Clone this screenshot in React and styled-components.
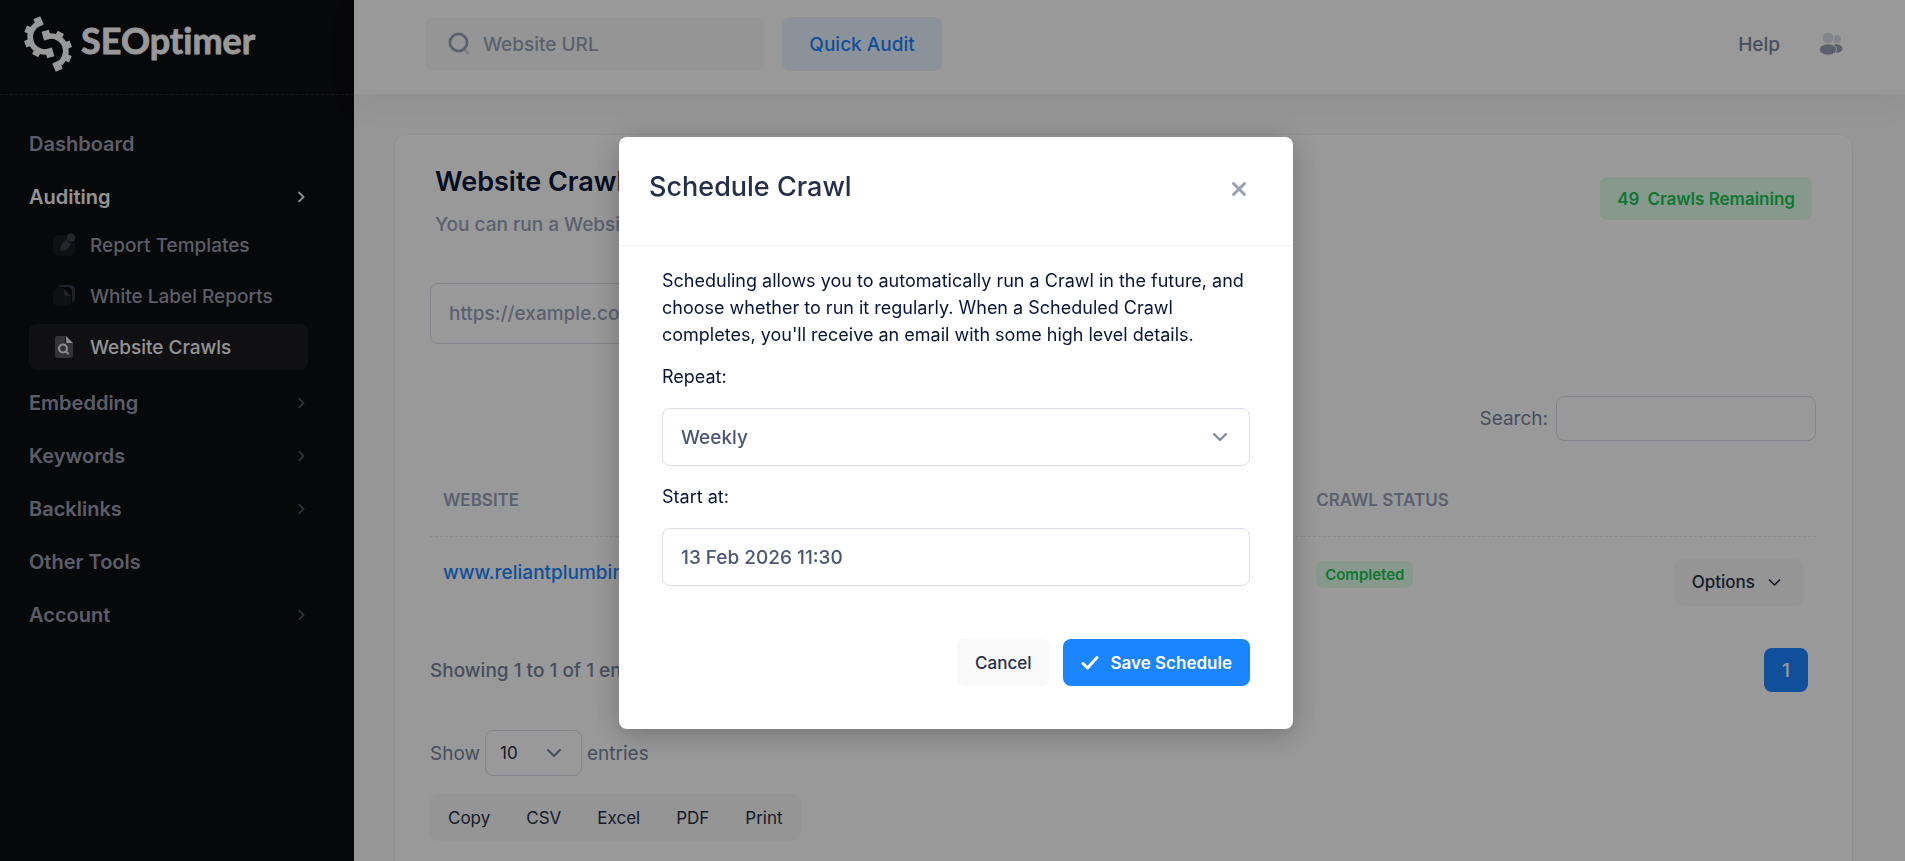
import React, { useState } from 'react'
import styled, { createGlobalStyle } from 'styled-components'

const GlobalStyle = createGlobalStyle`
  *, *::before, *::after {
    box-sizing: border-box;
  }
  body {
    margin: 0;
    overflow: hidden;
    background: #fafafa;
    color: #071437;
    font-family: Inter, "Liberation Sans", sans-serif;
    font-size: 18px;
  }
  button, input, select {
    font-family: inherit;
    margin: 0;
  }
  a {
    text-decoration: none;
  }
  h1, h2, p {
    margin: 0;
  }
  svg {
    flex: none;
  }
`;

/* ---------- shell ---------- */

const Shell = styled.div`
  display: flex;
  height: 100vh;
`;
const Main = styled.div`
  display: flex;
  flex-direction: column;
  flex: 1;
  min-width: 0;
`;

/* ---------- sidebar ---------- */

const Sidebar = styled.aside`
  flex: 0 0 354px;
  background: #0d0e12;
`;
const Brand = styled.a`
  display: flex;
  align-items: center;
  height: 95px;
  padding: 0 0 6px 22px;
  border-bottom: 1px dashed #24252d;
`;
const Nav = styled.nav`
  display: flex;
  flex-direction: column;
  gap: 8px;
  padding: 26px 46px 0 29px;
`;
const NavLink = styled.a`
  display: flex;
  align-items: center;
  justify-content: space-between;
  height: 45px;
  font-size: 20px;
  font-weight: 600;
  color: ${props => (props.$active ? '#f5f5f5' : '#9a9cae')};

  svg {
    color: ${props => (props.$active ? '#f5f5f5' : '#50525e')};
  }
`;
const SubNav = styled.div`
  display: flex;
  flex-direction: column;
  gap: 5px;
  margin: -5px 0 2px;
`;
const SubLink = styled.a`
  display: flex;
  align-items: center;
  gap: 14px;
  height: 46px;
  padding-left: 23px;
  border-radius: 8px;
  font-size: 19px;
  font-weight: 500;
  color: ${props => (props.$active ? '#f5f5f5' : '#9a9cae')};
  background: ${props => (props.$active ? '#1c1c1f' : 'transparent')};
`;

/* ---------- top bar ---------- */

const Topbar = styled.header`
  display: flex;
  align-items: center;
  justify-content: space-between;
  flex: none;
  height: 94px;
  padding: 0 62px 6px 71px;
  background: #fff;
  box-shadow: 0 10px 30px rgba(0, 0, 0, 0.05);
`;
const TopGroup = styled.div`
  display: flex;
  align-items: center;
  gap: ${props => props.$gap};
`;
const UrlBox = styled.label`
  display: flex;
  align-items: center;
  gap: 12px;
  width: 340px;
  height: 54px;
  padding: 0 22px;
  border-radius: 8px;
  background: #f9f9f9;
`;
const UrlInput = styled.input`
  width: 100%;
  min-width: 0;
  border: 0;
  padding: 0;
  background: none;
  font-size: 19px;
  font-weight: 500;

  &::placeholder {
    color: #99a1b7;
  }
`;
const AuditButton = styled.button`
  height: 54px;
  width: 160px;
  border: 0;
  border-radius: 8px;
  background: #e9f3ff;
  color: #1b84ff;
  font-size: 19px;
  font-weight: 500;
`;
const HelpLink = styled.a`
  font-size: 19px;
  font-weight: 500;
  color: #78829d;
`;
const PlainButton = styled.button`
  display: flex;
  border: 0;
  padding: 0;
  background: none;
`;

/* ---------- crawl card ---------- */

const Card = styled.main`
  flex: none;
  margin: 40px 52px 0 40px;
  padding: 26px 36px 60px 35px;
  border: 1px solid #f1f1f4;
  border-radius: 12px;
  background: #fff;
`;
const CardHead = styled.div`
  display: flex;
  align-items: flex-start;
  justify-content: space-between;
  padding: 0 4px 0 5px;
`;
const Title = styled.h1`
  font-size: 27px;
  font-weight: 600;
  line-height: 42px;
`;
const Subtitle = styled.p`
  margin-top: 4px;
  font-size: 19px;
  font-weight: 500;
  line-height: 36px;
  color: #99a1b7;
`;
const Remaining = styled.span`
  display: flex;
  align-items: center;
  gap: 8px;
  height: 43px;
  margin-top: 16px;
  padding: 0 17px;
  border-radius: 8px;
  background: #dfffea;
  color: #17c653;
  font-size: 17px;
  font-weight: 600;
`;
const CrawlInput = styled.input`
  display: block;
  width: 480px;
  height: 61px;
  margin-top: 40px;
  padding: 0 18px;
  border: 1px solid #dbdfe9;
  border-radius: 8px;
  background: #fff;
  font-size: 19px;
  font-weight: 500;

  &::placeholder {
    color: #99a1b7;
  }
`;
const SearchRow = styled.label`
  display: flex;
  align-items: center;
  justify-content: flex-end;
  gap: 8px;
  margin-top: 52px;
  font-size: 19px;
  color: #78829d;
`;
const SearchInput = styled.input`
  width: 260px;
  height: 45px;
  padding: 0 14px;
  border: 1px solid #dbdfe9;
  border-radius: 8px;
  background: #fff;
`;
const Table = styled.table`
  width: 100%;
  margin-top: 24px;
  border-collapse: collapse;
  table-layout: fixed;
`;
const Th = styled.th`
  width: ${props => props.$width};
  height: 71px;
  padding: 0 13px;
  border-bottom: 1px dashed #e8e8ee;
  text-align: left;
  font-size: 17px;
  font-weight: 600;
  color: #99a1b7;
`;
const Td = styled.td`
  height: 92px;
  padding: 22px 13px 0;
  vertical-align: top;
  text-align: ${props => props.$align || 'left'};
`;
const SiteLink = styled.a`
  font-size: 19px;
  font-weight: 500;
  line-height: 28px;
  color: #1b84ff;
`;
const Status = styled.span`
  display: inline-flex;
  align-items: center;
  height: 27px;
  margin-top: 2px;
  padding: 0 9px;
  border-radius: 7px;
  background: #dfffea;
  color: #17c653;
  font-size: 15px;
  font-weight: 600;
`;
const Button = styled.button`
  display: inline-flex;
  align-items: center;
  justify-content: center;
  gap: 12px;
  height: 47px;
  padding: 0 18px;
  border: 0;
  border-radius: 8px;
  background: ${props => (props.$primary ? '#1b84ff' : '#f9f9f9')};
  color: ${props => (props.$primary ? '#fff' : '#252f4a')};
  font-size: 17px;
  font-weight: ${props => (props.$primary ? 600 : 500)};
`;
const OptionsButton = styled(Button)`
  padding-right: 21px;
`;
const TableFoot = styled.div`
  display: flex;
  align-items: center;
  justify-content: space-between;
  margin-top: 20px;
  padding-right: 8px;
  font-size: 19px;
  font-weight: 500;
  color: #78829d;
`;
const PageButton = styled.button`
  width: 44px;
  height: 44px;
  border: 0;
  border-radius: 8px;
  background: #1b84ff;
  color: #fff;
  font-size: 19px;
  font-weight: 500;
`;
const LengthRow = styled.label`
  display: flex;
  align-items: center;
  gap: 5px;
  margin-top: 38px;
  font-size: 19px;
  color: #78829d;
`;
const ExportGroup = styled.div`
  display: inline-flex;
  margin-top: 18px;
  border-radius: 8px;
  background: #f9f9f9;
`;
const ExportButton = styled(Button)`
  background: none;
  font-weight: 400;
`;

/* ---------- select with a drawn arrow ---------- */

const SelectWrap = styled.span`
  display: grid;
  align-items: center;
  width: ${props => props.$width};

  > * {
    grid-area: 1 / 1;
  }
  svg {
    justify-self: end;
    margin-right: ${props => props.$inset};
    color: #78829d;
    pointer-events: none;
  }
`;
const Select = styled.select`
  appearance: none;
  width: 100%;
  height: ${props => (props.$small ? '46px' : '58px')};
  padding: 0 ${props => (props.$small ? '14px' : '18px')};
  border: 1px solid #dbdfe9;
  border-radius: 8px;
  background: #fff;
  color: ${props => (props.$small ? '#252f4a' : '#4b5675')};
  font-size: ${props => (props.$small ? '17px' : '19px')};
  font-weight: ${props => (props.$small ? 400 : 500)};
`;

/* ---------- modal ---------- */

const Overlay = styled.div`
  position: fixed;
  inset: 0;
  display: flex;
  justify-content: center;
  align-items: flex-start;
  padding: 137px 0 0 7px;
  background: rgba(0, 0, 0, 0.4);
`;
const Dialog = styled.div`
  width: 674px;
  max-width: 100%;
  border-radius: 8px;
  background: #fff;
  box-shadow: 0 6px 30px rgba(0, 0, 0, 0.25);
`;
const DialogHead = styled.div`
  display: flex;
  align-items: center;
  justify-content: space-between;
  height: 109px;
  padding: 0 46px 10px 30px;
  border-bottom: 1px solid #f1f1f4;
`;
const DialogTitle = styled.h2`
  font-size: 27px;
  font-weight: 500;
  color: #252f4a;
`;
const CloseButton = styled(PlainButton)`
  padding-top: 6px;
`;
const DialogBody = styled.form`
  display: flex;
  flex-direction: column;
  padding: 21px 43px 43px;
`;
const DialogText = styled.p`
  line-height: 27px;
  margin-bottom: 16px;
`;
const Field = styled.div`
  display: flex;
  flex-direction: column;
  gap: 18px;
  margin-bottom: 18px;
`;
const Label = styled.label`
  line-height: 26px;
`;
const DateInput = styled.input`
  width: 100%;
  height: 58px;
  padding: 0 18px;
  border: 1px solid #dbdfe9;
  border-radius: 8px;
  background: #fff;
  color: #4b5675;
  font-size: 19px;
  font-weight: 500;
`;
const Actions = styled.div`
  display: flex;
  justify-content: flex-end;
  gap: 13px;
  margin-top: 35px;
`;

const BrandName = styled.text`
  font-family: Lato, "Open Sans", sans-serif;
  font-size: 36px;
  font-weight: 700;
  font-variant-ligatures: none;
`;

/* ---------- drawings ---------- */

// half a gear wheel, open to the right; the logo is two of them
const HalfGear = () => (
  <>
    <path d="M27.100 35.400A15 15 0 0 1 17.100 7.200" fill="none" strokeWidth="5.600" />
    {[74, 247].map(angle => (
      <path key={angle} d="M35 21h9" strokeWidth="7.500" transform={`rotate(${angle} 23 21)`} />
    ))}
    {[118, 160, 203].map(angle => (
      <path key={angle} d="M38 21h6" strokeWidth="7" transform={`rotate(${angle} 23 21)`} />
    ))}
  </>
);

const Logo = () => (
  <svg width="240" height="56" viewBox="0 0 240 56" role="img" aria-label="SEOptimer">
    <g stroke="#fff">
      <HalfGear />
      <g transform="rotate(180 26 28)"><HalfGear /></g>
    </g>
    <BrandName x="59" y="38" fill="#fff" stroke="#fff" strokeWidth="0.800" strokeLinejoin="round">SEOptimer</BrandName>
  </svg>
);

const Chevron = ({ size = 18, down }) => (
  <svg width={size} height={size} viewBox="0 0 18 18" fill="none" stroke="currentColor" strokeWidth="2" strokeLinecap="round" strokeLinejoin="round">
    <path d={down ? 'M3 6l6 6 6-6' : 'M8 4l5 5-5 5'} />
  </svg>
);

const SearchIcon = () => (
  <svg width="24" height="24" viewBox="0 0 24 24" fill="none" strokeLinecap="round">
    <path d="M18.500 18.500l2.500 2.500" stroke="#d3d6de" strokeWidth="3" />
    <circle cx="11.500" cy="10.500" r="8.600" stroke="#99a1b7" strokeWidth="2.800" />
  </svg>
);

const UsersIcon = () => (
  <svg width="24" height="24" viewBox="0 0 24 24">
    <circle cx="18" cy="7.200" r="4.200" fill="#dcdfe6" />
    <ellipse cx="17.500" cy="16.500" rx="6" ry="4.300" fill="#99a1b7" />
    <circle cx="9" cy="6" r="5.800" fill="#dcdfe6" stroke="#fff" />
    <ellipse cx="9" cy="17.500" rx="8.500" ry="5.700" fill="#99a1b7" stroke="#fff" />
  </svg>
);

const TemplateIcon = () => (
  <svg width="24" height="24" viewBox="0 0 24 24">
    <rect x="1" y="2" width="22" height="21" rx="6" fill="#1a1b21" />
    <path d="M8.500 17.500q-.5-4 1-6l5-5.500q1.500 4 5 5l-5 5.500q-2 1.500-6 1z" fill="#3f414b" />
    <circle cx="19" cy="4.500" r="4" fill="#3f414b" />
  </svg>
);

const ReportIcon = () => (
  <svg width="24" height="24" viewBox="0 0 24 24">
    <path d="M6 3Q7 1 10 1h8q5 0 5 5v8q0 3-3 4V8q0-5-5-5z" fill="#363843" />
    <path d="M6 4h6v5q0 3 3 3h4v5q0 5-6 5H7q-6 0-6-5v-7q0-6 5-6z" fill="#1a1b21" />
    <path d="M12 5l7 7h-4q-3 0-3-3z" fill="#363843" />
  </svg>
);

const CrawlIcon = () => (
  <svg width="24" height="24" viewBox="0 0 24 24">
    <path d="M5 1h8v6q0 1 1 1h7v12q0 3-3 3H6q-3 0-3-3V3q0-2 2-2z" fill="#58585b" />
    <path d="M14 1l7 7h-6q-1 0-1-1z" fill="#e8e8e8" />
    <g fill="none" stroke="#e8e8e8" strokeWidth="2.200" strokeLinecap="round">
      <circle cx="11" cy="13.500" r="4" />
      <path d="M14 16.500l2 2" />
    </g>
  </svg>
);

const CloseIcon = () => (
  <svg width="16" height="16" viewBox="0 0 16 16" stroke="#99a1b7" strokeWidth="3" strokeLinecap="round">
    <path d="M2.500 2.500l11 11M13.500 2.500l-11 11" />
  </svg>
);

const CheckIcon = () => (
  <svg width="18" height="16" viewBox="0 0 18 16" fill="none" stroke="#fff" strokeWidth="3" strokeLinecap="round" strokeLinejoin="round">
    <path d="M2 8.500l4.500 4.500L16 2.500" />
  </svg>
);

const subItems = [
  { name: 'Report Templates', icon: <TemplateIcon /> },
  { name: 'White Label Reports', icon: <ReportIcon /> },
  { name: 'Website Crawls', icon: <CrawlIcon />, active: true },
];
const lowerItems = [
  { name: 'Embedding', more: true },
  { name: 'Keywords', more: true },
  { name: 'Backlinks', more: true },
  { name: 'Other Tools' },
  { name: 'Account', more: true },
];
const exportTypes = ['Copy', 'CSV', 'Excel', 'PDF', 'Print'];

const SideMenu = () => (
  <Sidebar>
    <Brand href="#"><Logo /></Brand>
    <Nav>
      <NavLink href="#">Dashboard</NavLink>
      <NavLink href="#" $active>Auditing<Chevron size={16} /></NavLink>
      <SubNav>
        {subItems.map(item => (
          <SubLink key={item.name} href="#" $active={item.active}>
            {item.icon}
            {item.name}
          </SubLink>
        ))}
      </SubNav>
      {lowerItems.map(item => (
        <NavLink key={item.name} href="#">
          {item.name}
          {item.more && <Chevron size={16} />}
        </NavLink>
      ))}
    </Nav>
  </Sidebar>
);

const Header = () => (
  <Topbar>
    <TopGroup $gap="17px">
      <UrlBox>
        <SearchIcon />
        <UrlInput type="text" aria-label="Website URL" placeholder="Website URL" />
      </UrlBox>
      <AuditButton type="button">Quick Audit</AuditButton>
    </TopGroup>
    <TopGroup $gap="39px">
      <HelpLink href="#">Help</HelpLink>
      <PlainButton type="button" aria-label="Account"><UsersIcon /></PlainButton>
    </TopGroup>
  </Topbar>
);

const CrawlCard = () => (
  <Card>
    <CardHead>
      <div>
        <Title>Website Crawls</Title>
        <Subtitle>You can run a Website Crawl</Subtitle>
      </div>
      <Remaining><span>49</span><span>Crawls Remaining</span></Remaining>
    </CardHead>
    <CrawlInput type="text" aria-label="Website to crawl" placeholder="https://example.com" />
    <SearchRow>
      Search:
      <SearchInput type="search" />
    </SearchRow>
    <Table>
      <thead>
        <tr>
          <Th $width="63%">WEBSITE</Th>
          <Th $width="20%">CRAWL STATUS</Th>
          <Th $width="17%" />
        </tr>
      </thead>
      <tbody>
        <tr>
          <Td><SiteLink href="#">www.reliantplumbing</SiteLink></Td>
          <Td><Status>Completed</Status></Td>
          <Td $align="right"><OptionsButton type="button">Options <Chevron size={15} down /></OptionsButton></Td>
        </tr>
      </tbody>
    </Table>
    <TableFoot>
      Showing 1 to 1 of 1 entries
      <PageButton type="button">1</PageButton>
    </TableFoot>
    <LengthRow>
      Show
      <SelectWrap $width="97px" $inset="19px">
        <Select $small defaultValue="10">
          <option>10</option>
          <option>25</option>
          <option>50</option>
        </Select>
        <Chevron down />
      </SelectWrap>
      entries
    </LengthRow>
    <ExportGroup>
      {exportTypes.map(type => <ExportButton key={type} type="button">{type}</ExportButton>)}
    </ExportGroup>
  </Card>
);

const ScheduleDialog = ({ onClose }) => {
  const [repeat, setRepeat] = useState('Weekly');
  const [startAt, setStartAt] = useState('13 Feb 2026 11:30');

  return (
    <Overlay>
      <Dialog role="dialog" aria-modal="true" aria-labelledby="schedule-title">
        <DialogHead>
          <DialogTitle id="schedule-title">Schedule Crawl</DialogTitle>
          <CloseButton type="button" aria-label="Close" onClick={onClose}><CloseIcon /></CloseButton>
        </DialogHead>
        <DialogBody onSubmit={e => e.preventDefault()}>
          <DialogText>
            Scheduling allows you to automatically run a Crawl in the future, and choose whether to run it regularly. When a Scheduled Crawl completes, you'll receive an email with some high level details.
          </DialogText>
          <Field>
            <Label htmlFor="repeat">Repeat:</Label>
            <SelectWrap $width="100%" $inset="21px">
              <Select id="repeat" value={repeat} onChange={e => setRepeat(e.target.value)}>
                <option>Daily</option>
                <option>Weekly</option>
                <option>Monthly</option>
              </Select>
              <Chevron down />
            </SelectWrap>
          </Field>
          <Field>
            <Label htmlFor="start-at">Start at:</Label>
            <DateInput id="start-at" type="text" value={startAt} onChange={e => setStartAt(e.target.value)} />
          </Field>
          <Actions>
            <Button type="button" onClick={onClose}>Cancel</Button>
            <Button type="submit" $primary><CheckIcon />Save Schedule</Button>
          </Actions>
        </DialogBody>
      </Dialog>
    </Overlay>
  );
};

const App = () => {
  const [open, setOpen] = useState(true);

  return (
    <>
      <GlobalStyle />
      <Shell>
        <SideMenu />
        <Main>
          <Header />
          <CrawlCard />
        </Main>
      </Shell>
      {open && <ScheduleDialog onClose={() => setOpen(false)} />}
    </>
  )
}

export default App;
